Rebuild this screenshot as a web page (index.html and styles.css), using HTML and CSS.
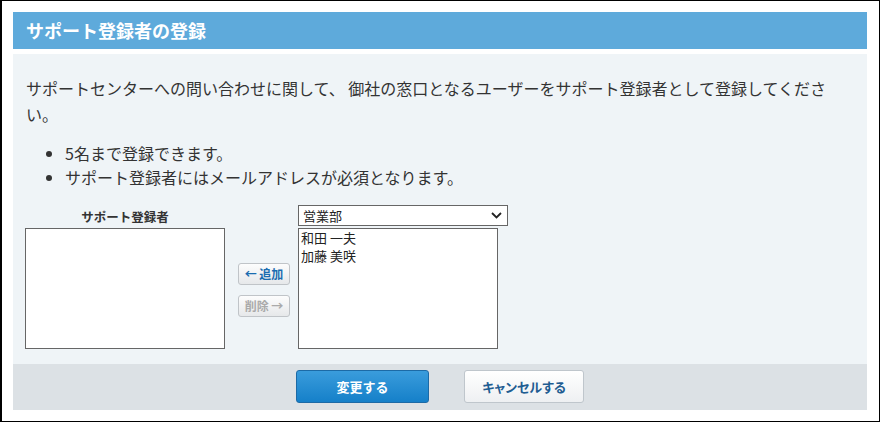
FILE: index.html
```html
<!DOCTYPE html>
<html lang="ja">
<head>
<meta charset="utf-8">
<link rel="stylesheet" href="styles.css">
</head>
<body>
<div class="frame">
  <div class="header">サポート登録者の登録</div>
  <div class="panel">
    <p class="intro">サポートセンターへの問い合わせに関して、 御社の窓口となるユーザーをサポート登録者として登録してください。</p>
    <ul class="notes">
      <li>5名まで登録できます。</li>
      <li>サポート登録者にはメールアドレスが必須となります。</li>
    </ul>
    <div class="picker">
      <div class="col">
        <div class="col-label">サポート登録者</div>
        <div class="listbox"></div>
      </div>
      <div class="moves">
        <button class="move add" type="button">← 追加</button>
        <button class="move del" type="button">削除 →</button>
      </div>
      <div class="col">
        <div class="select">
          <span>営業部</span>
          <svg width="11" height="7" viewBox="0 0 11 7"><path d="M1 1 L5.5 5.5 L10 1" fill="none" stroke="#222" stroke-width="1.8"/></svg>
        </div>
        <div class="listbox">
          <div class="item">和田 一夫</div>
          <div class="item">加藤 美咲</div>
        </div>
      </div>
    </div>
  </div>
  <div class="footer">
    <button class="btn primary" type="button">変更する</button>
    <button class="btn secondary" type="button">キャンセルする</button>
  </div>
</div>
</body>
</html>
```

FILE: styles.css
```css
* { box-sizing: border-box; }
html, body { margin: 0; padding: 0; background: #fff; }
body {
  font-family: "Noto Sans CJK JP", "Noto Sans", sans-serif;
  color: #333;
}
.frame {
  width: 880px;
  height: 422px;
  border-top: 1px solid #000;
  border-left: 2px solid #000;
  border-right: 1px solid #000;
  border-bottom: 1px solid #000;
  padding: 11px 12px 11px 11px;
}
.header {
  height: 37px;
  background: #5eaadb;
  color: #fff;
  font-weight: bold;
  font-size: 18px;
  line-height: 37px;
  padding-left: 13px;
}
.panel {
  margin-top: 5px;
  height: 310px;
  background: #eff4f7;
  padding: 21px 28px 0 13px;
}
.intro {
  margin: 0;
  font-size: 16px;
  line-height: 26px;
  color: #333;
}
.notes {
  margin: 14px 0 0 0;
  padding-left: 39px;
  font-size: 16px;
  line-height: 24px;
}
.picker {
  margin-top: 16px;
  display: flex;
  align-items: flex-start;
  margin-left: -1px;
}
.col { display: flex; flex-direction: column; }
.col-label {
  width: 200px;
  height: 23px;
  line-height: 23px;
  text-align: center;
  font-size: 12.5px;
  font-weight: bold;
  color: #333;
}
.listbox {
  width: 200px;
  height: 121px;
  background: #fff;
  border: 1px solid #666;
  padding: 0 2px;
}
.item {
  font-size: 13px;
  line-height: 18px;
  color: #222;
}
.moves {
  display: flex;
  flex-direction: column;
  gap: 10px;
  margin: 58px 8px 0 13px;
}
.move {
  width: 52px;
  height: 22px;
  padding: 0;
  border: 1px solid #c0c4c8;
  border-radius: 3px;
  background: linear-gradient(#fdfdfd, #e6e8ea);
  font-family: "Noto Sans CJK JP", sans-serif;
  font-size: 12px;
  font-weight: bold;
  line-height: 20px;
}
.move.add { color: #1a6cb0; }
.move.del { color: #aaaaaa; }
.select {
  width: 210px;
  height: 21px;
  margin-bottom: 2px;
  background: #fff;
  border: 1px solid #666;
  display: flex;
  align-items: center;
  justify-content: space-between;
  padding: 0 5px 0 4px;
  font-size: 13px;
  color: #222;
}
.footer {
  height: 46px;
  background: #dce1e5;
  display: flex;
  justify-content: center;
  align-items: flex-start;
  gap: 35px;
  padding-top: 6px;
}
.btn {
  height: 33px;
  border-radius: 3px;
  font-family: "Noto Sans CJK JP", sans-serif;
  font-size: 13px;
  font-weight: bold;
  padding: 0;
}
.btn.primary {
  width: 133px;
  color: #fff;
  border: 1px solid #1c6aa6;
  background: linear-gradient(#3a9cdc, #1580c9);
}
.btn.secondary {
  width: 120px;
  color: #1f5d92;
  border: 1px solid #bfc6cc;
  background: linear-gradient(#ffffff, #eef0f2);
  font-feature-settings: "palt";
}
```
